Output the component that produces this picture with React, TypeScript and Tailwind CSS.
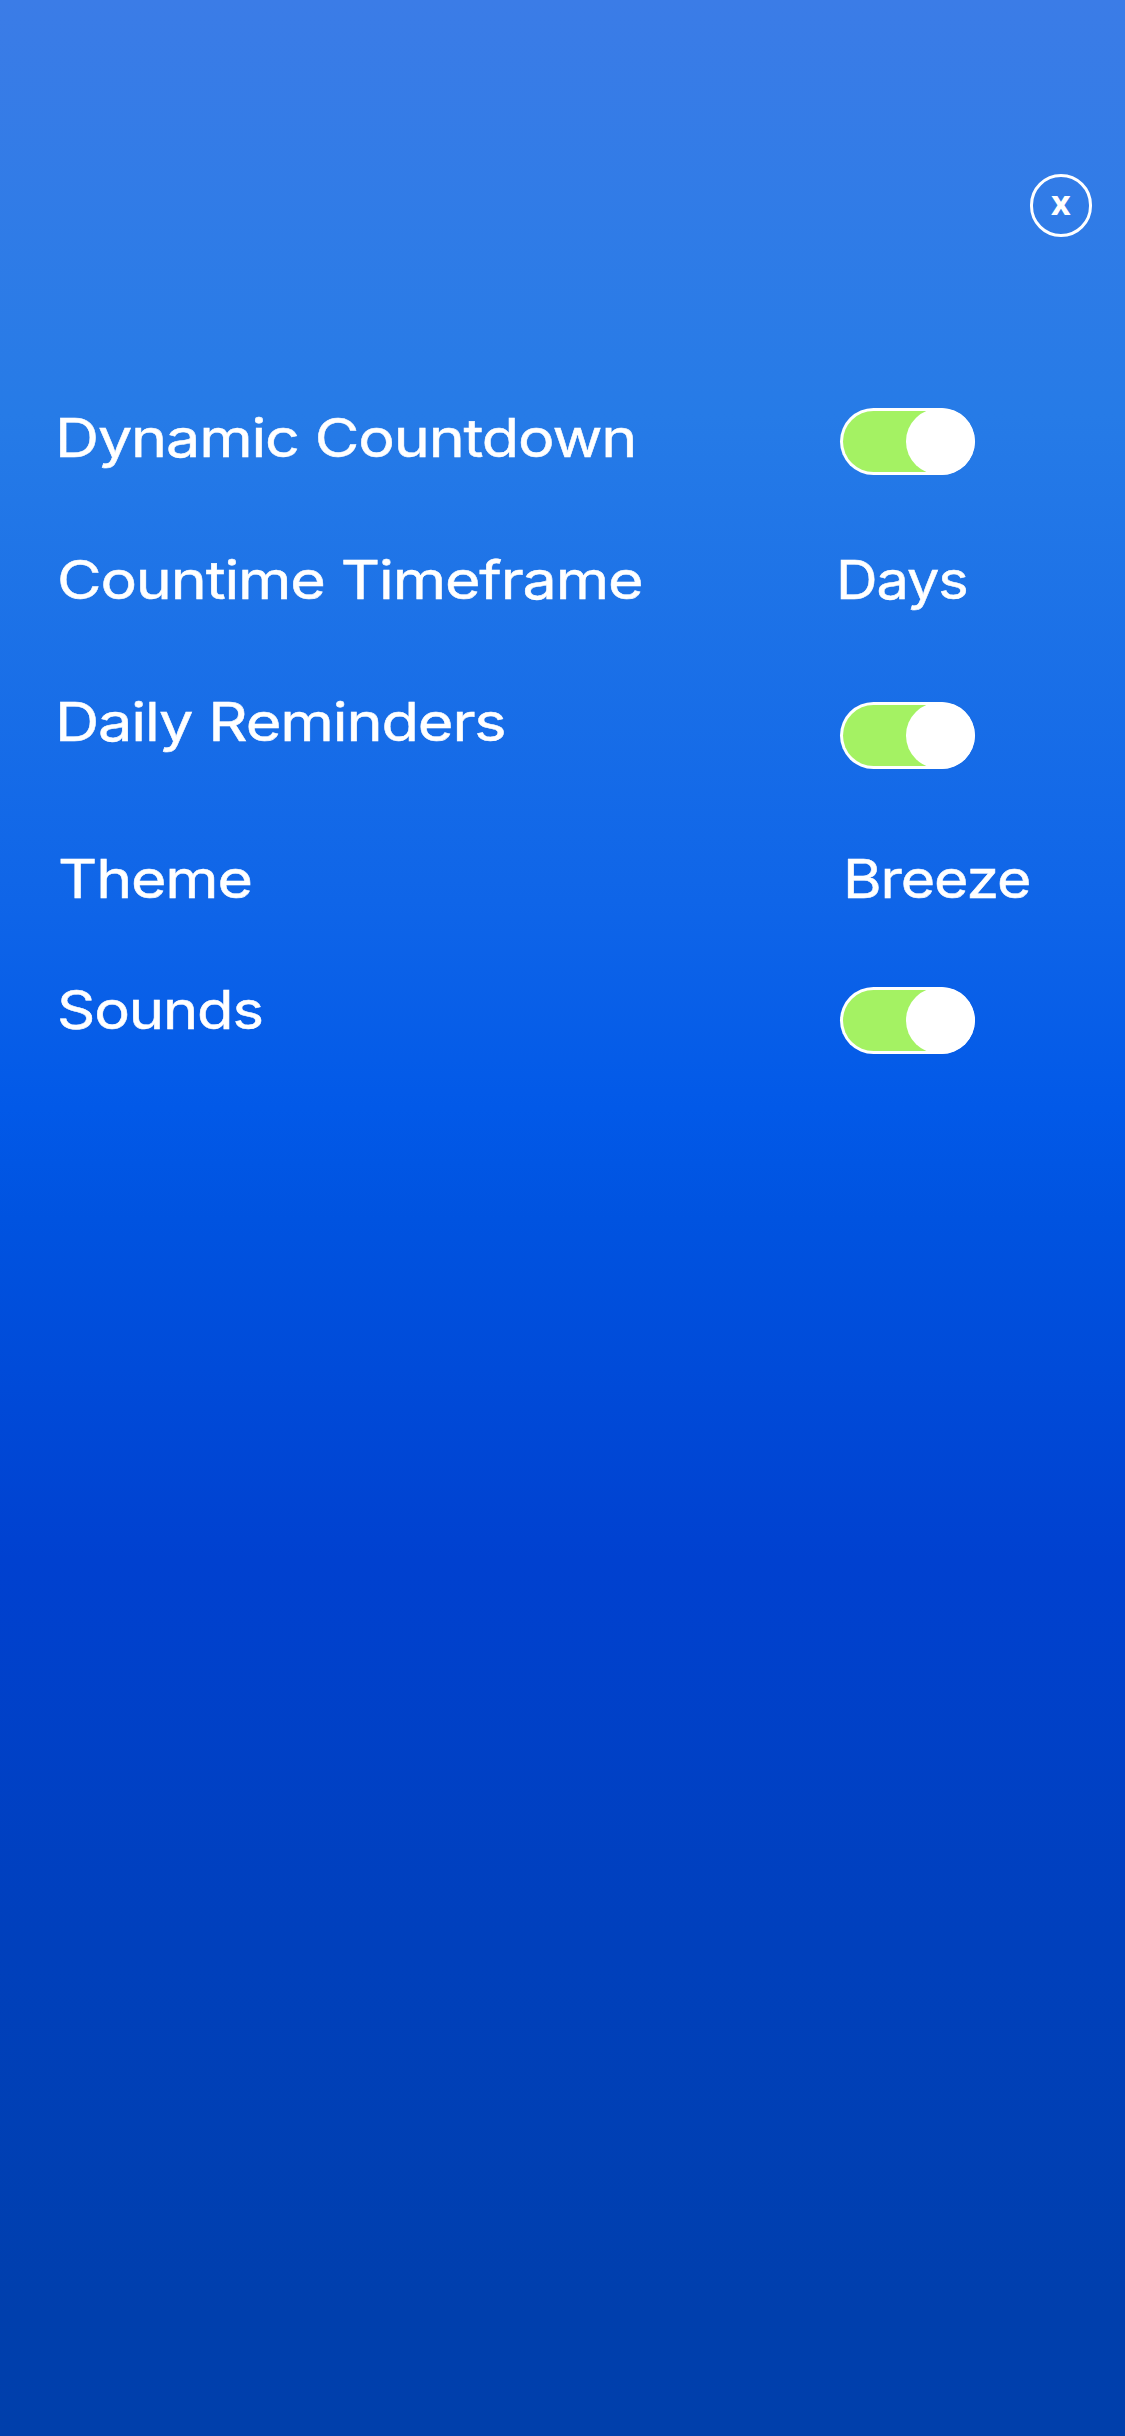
import { useState } from "react";

function Toggle({ label, className }: { label: string; className: string }) {
  const [on, setOn] = useState(true);
  return (
    <button
      type="button"
      role="switch"
      aria-checked={on}
      aria-label={label}
      onClick={() => setOn(!on)}
      className={`ml-[3.5px] flex h-[67px] w-[135.5px] shrink-0 overflow-hidden rounded-full bg-white ${className}`}
    >
      <span
        className={`m-[3px] flex h-[61px] w-[129.5px] rounded-full ${
          on ? "justify-end bg-[#a4f263]" : "justify-start bg-slate-400"
        }`}
      >
        <span className="-mx-[3px] -mt-[3px] h-[67px] w-[69.5px] shrink-0 rounded-[50%] bg-white" />
      </span>
    </button>
  );
}

function Text({ children, className }: { children: string; className: string }) {
  return (
    <span
      className={`block w-max origin-left leading-[64px] tracking-[-1px] whitespace-nowrap [-webkit-text-stroke:0.5px_white] ${className}`}
    >
      {children}
    </span>
  );
}

export default function App() {
  return (
    <main className="flex min-h-[2436px] w-full flex-col bg-[linear-gradient(180deg,#3b7ce7_0%,#267be7_17%,#0f65e8_37%,#0259e8_45.5%,#0053e0_50%,#0041d0_64%,#0040bc_80%,#003fad_95%,#003fab_100%)] pt-[174px] font-[Inter,sans-serif] text-[53px] font-normal text-white">
      <header className="mr-[33px] flex justify-end">
        <button
          type="button"
          aria-label="Close"
          className="flex size-[62.5px] items-center justify-center rounded-full border-3 border-white font-['Open_Sans',sans-serif] text-[34px] leading-none font-bold"
        >
          <span className="-mt-[7px]">x</span>
        </button>
      </header>

      <section className="mt-[169px] grid grid-cols-[836px_1fr] grid-rows-[142px_142px_157px_130px_80px]">
        <Text className="ml-[55px] scale-x-[1.152]">Dynamic Countdown</Text>
        <Toggle label="Dynamic Countdown" className="mt-[2px]" />

        <Text className="ml-[57px] scale-x-[1.151]">Countime Timeframe</Text>
        <Text className="scale-x-[1.088]">Days</Text>

        <Text className="ml-[55px] scale-x-[1.156]">Daily Reminders</Text>
        <Toggle label="Daily Reminders" className="mt-[12px]" />

        <Text className="ml-[58px] scale-x-[1.148]">Theme</Text>
        <Text className="ml-[7px] scale-x-[1.114]">Breeze</Text>

        <Text className="mt-px ml-[57px] scale-x-[1.126]">Sounds</Text>
        <Toggle label="Sounds" className="mt-[10px]" />
      </section>
    </main>
  );
}
